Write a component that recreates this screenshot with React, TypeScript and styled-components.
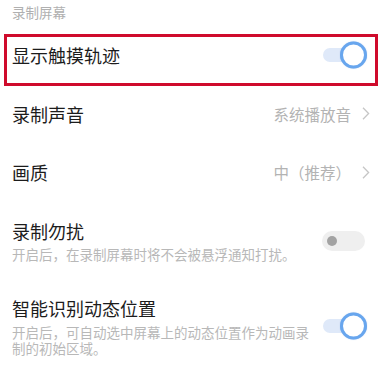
import React from 'react';
import styled, { createGlobalStyle } from 'styled-components';

const GlobalStyle = createGlobalStyle`
  html, body {
    margin: 0;
    padding: 0;
    background: #ffffff;
  }
  body {
    font-family: "Noto Sans CJK SC", "Noto Sans", sans-serif;
    -webkit-font-smoothing: antialiased;
  }
`;

const Page = styled.div`
  width: 385px;
  height: 371px;
  overflow: hidden;
  background: #ffffff;
`;

const SectionHeader = styled.div`
  padding: 4px 12px 6px;
  font-size: 13.5px;
  line-height: 16px;
  color: #b0b0b0;
`;

const RowWrap = styled.div`
  position: relative;
`;

const Highlight = styled.div`
  position: absolute;
  top: 8px;
  left: 4px;
  right: 7px;
  height: 52px;
  box-sizing: border-box;
  border: 3px solid #cf0b2c;
  pointer-events: none;
`;

const Row = styled.div<{ $tall?: boolean }>`
  display: flex;
  align-items: center;
  gap: 12px;
  padding: 18px 15px ${p => (p.$tall ? '17px' : '18.5px')} 12px;
`;

const TextCol = styled.div`
  flex: 1;
  min-width: 0;
  display: flex;
  flex-direction: column;
`;

const Title = styled.div`
  font-size: 18px;
  line-height: 22px;
  color: #1c1c1c;
`;

const Sub = styled.div`
  margin-top: 4.5px;
  font-size: 13.5px;
  line-height: 16px;
  color: #b8b8b8;
`;

const Value = styled.div`
  display: flex;
  align-items: center;
  gap: 11px;
  font-size: 15.5px;
  line-height: 20px;
  color: #b3b3b3;
`;

const Switch = styled.div<{ $on: boolean }>`
  position: relative;
  flex-shrink: 0;
  width: 44px;
  height: 20px;
  margin-right: ${p => (p.$on ? '3px' : '4px')};
`;

const Track = styled.div<{ $on: boolean }>`
  position: absolute;
  left: 0;
  top: 50%;
  transform: translateY(-50%);
  width: ${p => (p.$on ? '32px' : '43px')};
  height: ${p => (p.$on ? '14px' : '20px')};
  border-radius: 10px;
  background: ${p => (p.$on ? '#dfe9f9' : '#efefef')};
`;

const Knob = styled.div<{ $on: boolean }>`
  position: absolute;
  top: 50%;
  transform: translateY(-50%);
  box-sizing: border-box;
  border-radius: 50%;
  ${p =>
    p.$on
      ? `
    right: 0;
    width: 27px;
    height: 27px;
    background: #ffffff;
    border: 3px solid #68a6ee;
    box-shadow: 0 0 1px rgba(80, 140, 220, 0.5);
  `
      : `
    left: 5px;
    width: 10px;
    height: 10px;
    background: #a3a3a3;
  `}
`;

const Toggle: React.FC<{ on: boolean }> = ({ on }) => (
  <Switch $on={on}>
    <Track $on={on} />
    <Knob $on={on} />
  </Switch>
);

const Chevron = () => (
  <svg width="8" height="13" viewBox="0 0 8 13" fill="none">
    <path d="M1 0.8 L6.6 6.5 L1 12.2" stroke="#c6c6c6" strokeWidth="1.3" />
  </svg>
);

export default function App() {
  return (
    <Page>
      <GlobalStyle />
      <SectionHeader>录制屏幕</SectionHeader>

      <RowWrap>
        <Row>
          <TextCol>
            <Title>显示触摸轨迹</Title>
          </TextCol>
          <Toggle on />
        </Row>
        <Highlight />
      </RowWrap>

      <Row>
        <TextCol>
          <Title>录制声音</Title>
        </TextCol>
        <Value>
          系统播放音
          <Chevron />
        </Value>
      </Row>

      <Row>
        <TextCol>
          <Title>画质</Title>
        </TextCol>
        <Value>
          中（推荐）
          <Chevron />
        </Value>
      </Row>

      <Row $tall>
        <TextCol>
          <Title>录制勿扰</Title>
          <Sub>开启后，在录制屏幕时将不会被悬浮通知打扰。</Sub>
        </TextCol>
        <Toggle on={false} />
      </Row>

      <Row $tall>
        <TextCol>
          <Title>智能识别动态位置</Title>
          <Sub>开启后，可自动选中屏幕上的动态位置作为动画录制的初始区域。</Sub>
        </TextCol>
        <Toggle on />
      </Row>
    </Page>
  );
}
